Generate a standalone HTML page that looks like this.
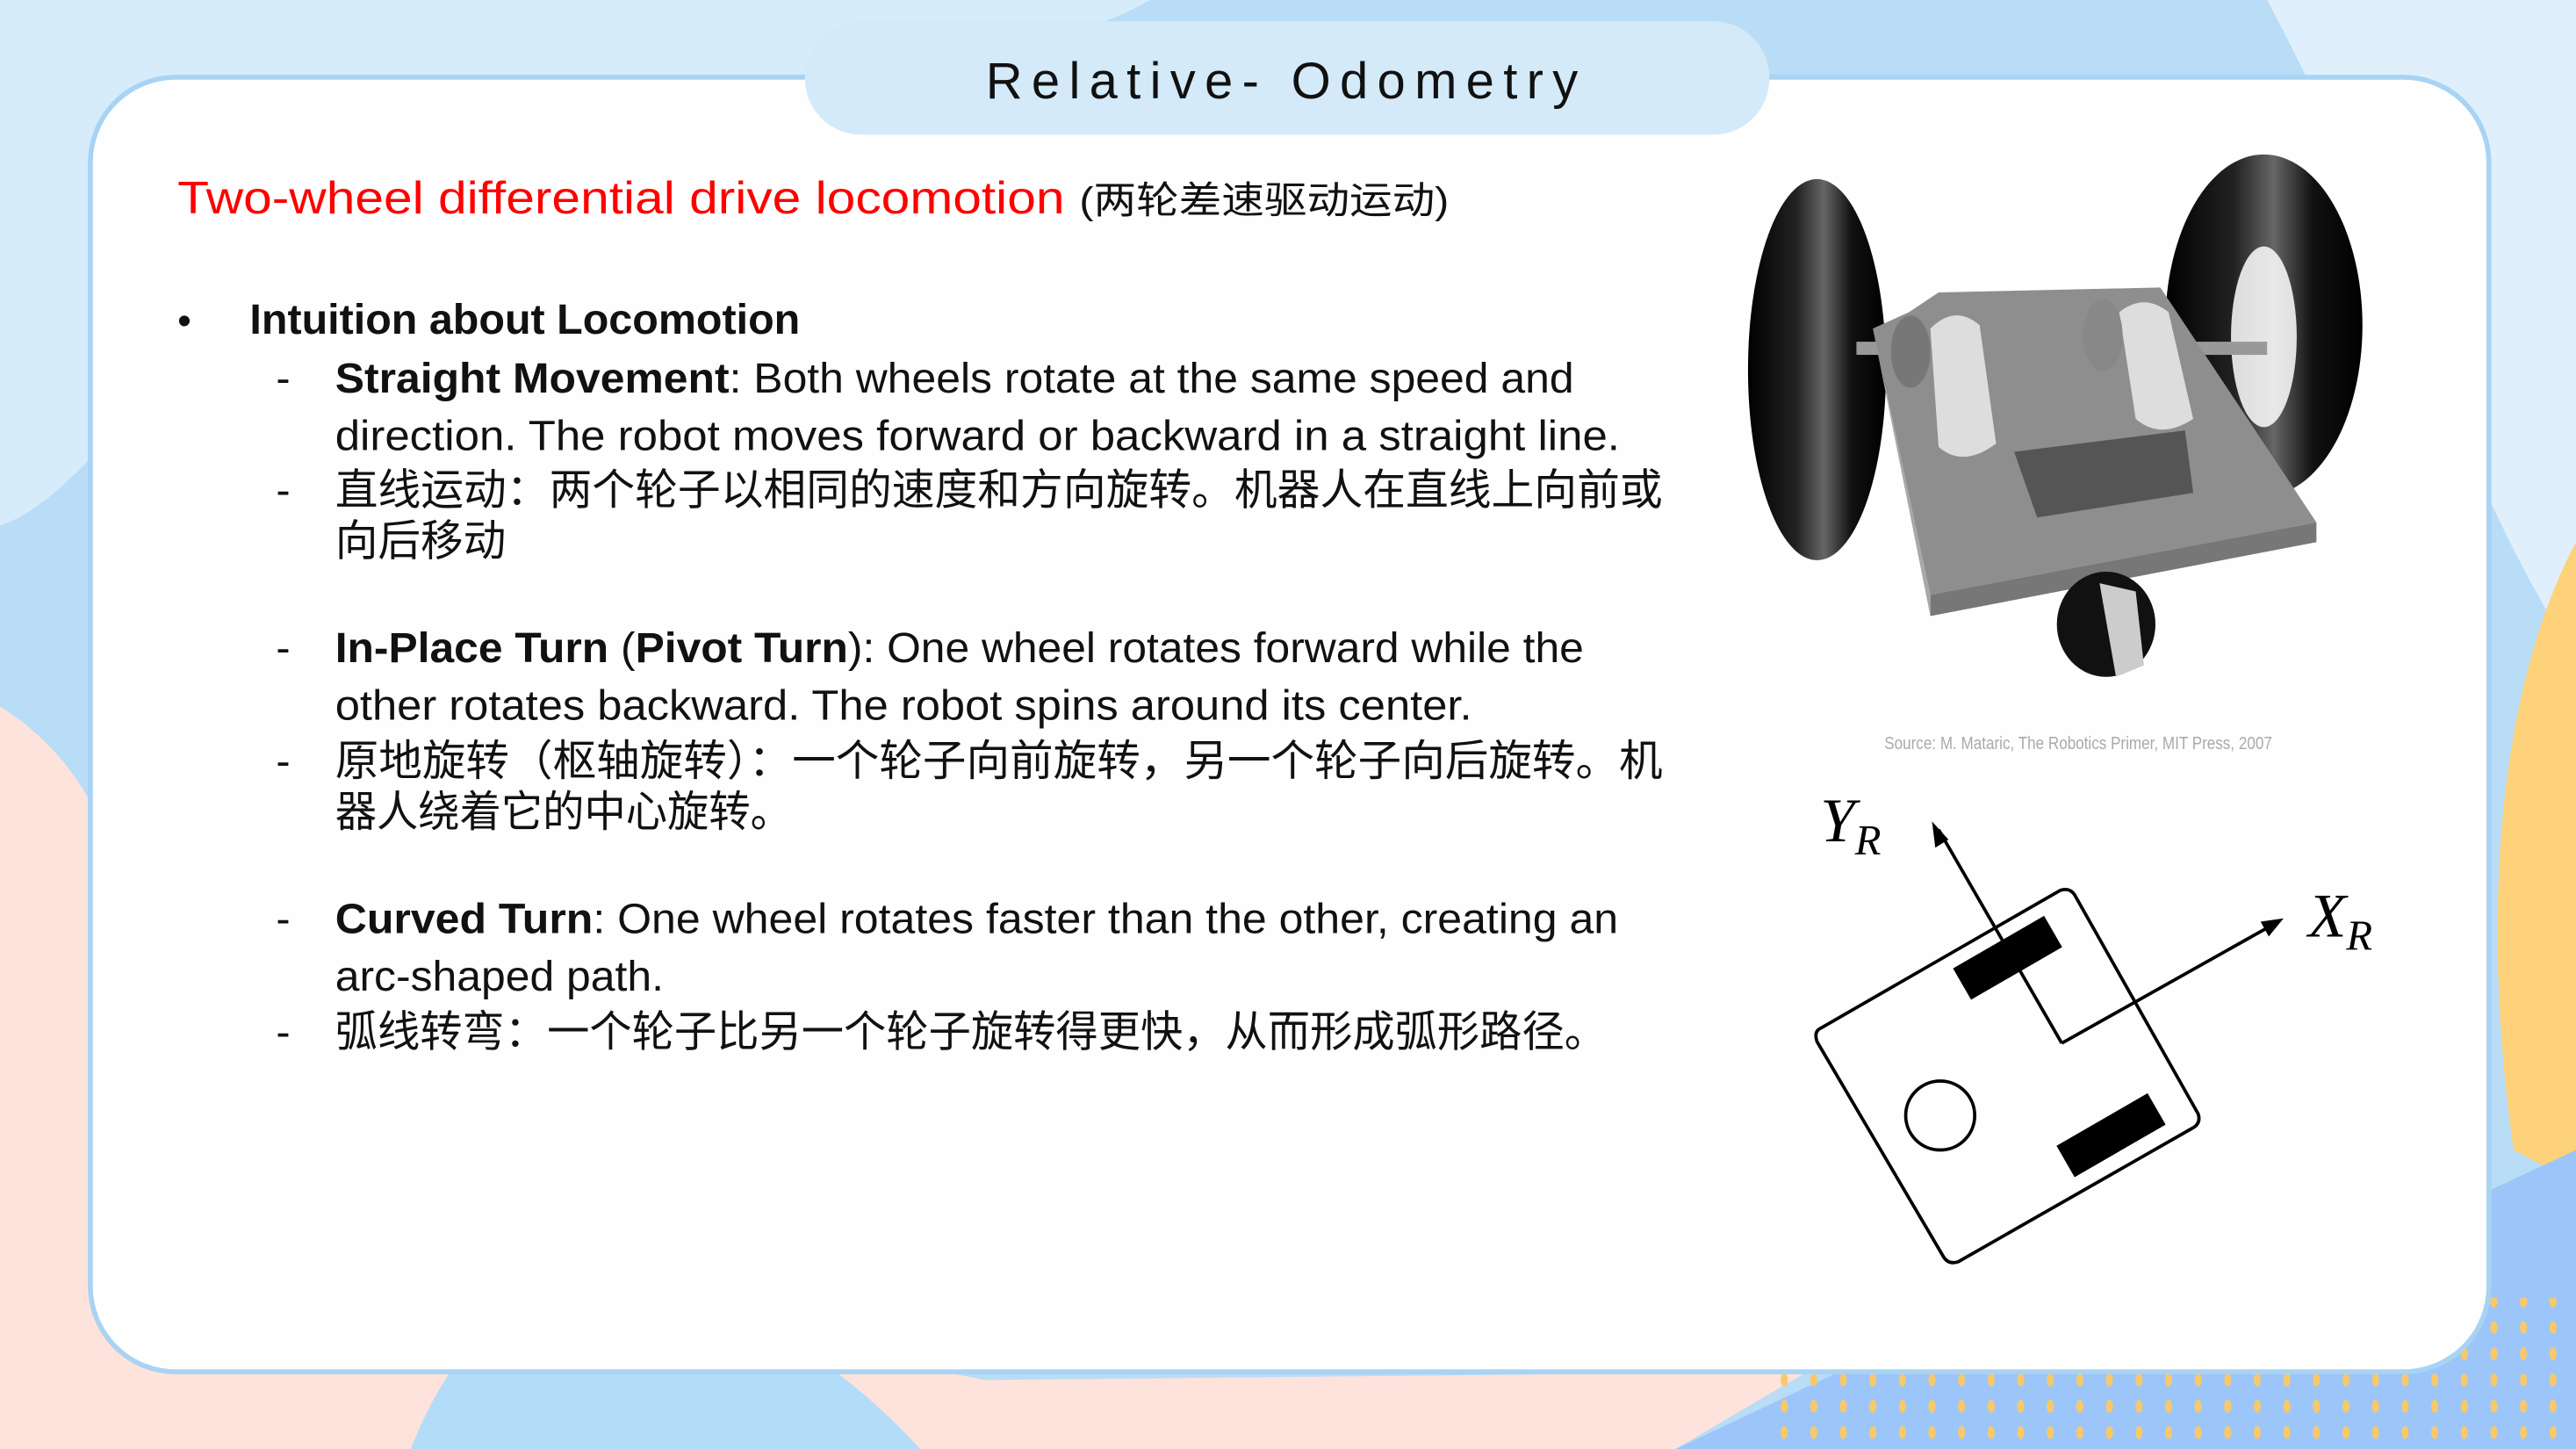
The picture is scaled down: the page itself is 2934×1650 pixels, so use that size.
<!DOCTYPE html>
<html><head><meta charset="utf-8"><style>html,body{margin:0;padding:0;overflow:hidden}svg{display:block}</style></head>
<body>
<svg width="2934" height="1650" viewBox="0 0 1568 882" preserveAspectRatio="none" xmlns="http://www.w3.org/2000/svg">
<defs>
<linearGradient id="tire" x1="0" y1="0" x2="1" y2="0"><stop offset="0" stop-color="#000"/><stop offset="0.35" stop-color="#222"/><stop offset="0.55" stop-color="#666"/><stop offset="0.75" stop-color="#111"/><stop offset="1" stop-color="#000"/></linearGradient>
<pattern id="ydots" width="18" height="16" patternUnits="userSpaceOnUse"><ellipse cx="6" cy="8" rx="2.2" ry="4" fill="#f7c96a"/></pattern>
</defs>
<rect width="1568" height="882" fill="#b9dcf7"/>
<path d="M0 0 H700 C600 60 300 40 200 120 C120 180 60 300 0 320Z" fill="#d6ecfb"/>
<path d="M1380 0 H1568 V400 C1500 300 1460 150 1380 0Z" fill="#dff0fc"/>
<path d="M0 430 C80 480 120 600 60 882 H0Z" fill="#fde3dc"/>
<path d="M0 882 V780 C200 820 400 800 600 840 L1100 835 L1020 882Z" fill="#fde3dc"/>
<path d="M250 882 C290 780 360 760 430 790 C500 820 540 860 560 882Z" fill="#b3dcf9"/>
<path d="M1568 330 C1520 420 1510 560 1530 700 L1568 720Z" fill="#fdd27a"/>
<path d="M1020 882 L1130 830 L1440 760 L1568 700 V882Z" fill="#9cc5fa"/>
<rect x="1080" y="790" width="488" height="92" fill="url(#ydots)"/>
<rect x="55" y="47" width="1460" height="788" rx="52" fill="#fefefe" stroke="#a9d3f3" stroke-width="3"/>
<rect x="490" y="13" width="587" height="69" rx="34" fill="#d4eaf8"/>
<text x="783" y="60" text-anchor="middle" font-family="Liberation Sans, sans-serif" font-size="31" letter-spacing="5.5" fill="#111">Relative- Odometry</text>
<g font-family="Liberation Sans, 'Noto Sans CJK SC', sans-serif">
<text x="108" y="130" font-size="28" fill="#ff0000" textLength="540" lengthAdjust="spacingAndGlyphs">Two-wheel differential drive locomotion</text>
<text x="657" y="130" font-size="23" fill="#111" textLength="225" lengthAdjust="spacingAndGlyphs">(两轮差速驱动运动)</text>
<text x="108" y="203" font-size="24" fill="#111">•</text>
<text x="152" y="203" font-size="26" font-weight="bold" fill="#111" textLength="335" lengthAdjust="spacingAndGlyphs">Intuition about Locomotion</text>
<g font-size="26" fill="#111">
<text x="168" y="239">-</text>
<text x="204" y="239" textLength="754" lengthAdjust="spacingAndGlyphs"><tspan font-weight="bold">Straight Movement</tspan>: Both wheels rotate at the same speed and</text>
<text x="204" y="274" textLength="782" lengthAdjust="spacingAndGlyphs">direction. The robot moves forward or backward in a straight line.</text>
<text x="168" y="307">-</text>
<text x="204" y="307" textLength="808" lengthAdjust="spacingAndGlyphs">直线运动：两个轮子以相同的速度和方向旋转。机器人在直线上向前或</text>
<text x="204" y="338" textLength="104" lengthAdjust="spacingAndGlyphs">向后移动</text>
<text x="168" y="403">-</text>
<text x="204" y="403" textLength="760" lengthAdjust="spacingAndGlyphs"><tspan font-weight="bold">In-Place Turn</tspan> (<tspan font-weight="bold">Pivot Turn</tspan>): One wheel rotates forward while the</text>
<text x="204" y="438" textLength="692" lengthAdjust="spacingAndGlyphs">other rotates backward. The robot spins around its center.</text>
<text x="168" y="472">-</text>
<text x="204" y="472" textLength="808" lengthAdjust="spacingAndGlyphs">原地旋转（枢轴旋转）：一个轮子向前旋转，另一个轮子向后旋转。机</text>
<text x="204" y="503" textLength="278" lengthAdjust="spacingAndGlyphs">器人绕着它的中心旋转。</text>
<text x="168" y="568">-</text>
<text x="204" y="568" textLength="781" lengthAdjust="spacingAndGlyphs"><tspan font-weight="bold">Curved Turn</tspan>: One wheel rotates faster than the other, creating an</text>
<text x="204" y="603" textLength="200" lengthAdjust="spacingAndGlyphs">arc-shaped path.</text>
<text x="168" y="637">-</text>
<text x="204" y="637" textLength="774" lengthAdjust="spacingAndGlyphs">弧线转弯：一个轮子比另一个轮子旋转得更快，从而形成弧形路径。</text>
</g>
<text x="1147" y="456" font-size="11" fill="#aaa" textLength="236" lengthAdjust="spacingAndGlyphs">Source: M. Mataric, The Robotics Primer, MIT Press, 2007</text>
</g>
<!-- robot -->
<ellipse cx="1378" cy="198" rx="60" ry="104" fill="url(#tire)"/>
<ellipse cx="1378" cy="205" rx="20" ry="55" fill="#fff" opacity="0.85"/>
<ellipse cx="1106" cy="225" rx="42" ry="116" fill="url(#tire)"/>
<rect x="1130" y="208" width="250" height="8" fill="#999"/>
<path d="M1162 190 L1180 178 L1315 175 L1410 318 L1175 362 L1140 200Z" fill="#8e8e8e"/>
<path d="M1410 318 L1410 330 L1175 375 L1175 362Z" fill="#777"/>
<path d="M1140 200 L1175 362 L1175 375 L1150 250Z" fill="#a8a8a8"/>
<path d="M1226 275 L1330 262 L1335 300 L1240 315Z" fill="#555"/>
<path d="M1175 200 Q1190 185 1205 198 L1215 270 Q1195 285 1180 272Z" fill="#ddd"/>
<path d="M1290 190 Q1305 178 1320 190 L1335 255 Q1315 268 1300 255Z" fill="#ddd"/>
<ellipse cx="1163" cy="214" rx="12" ry="22" fill="#777"/>
<ellipse cx="1280" cy="204" rx="12" ry="22" fill="#888"/>
<rect x="1276" y="355" width="8" height="15" fill="#999"/>
<ellipse cx="1282" cy="380" rx="30" ry="32" fill="#111"/>
<path d="M1278 355 L1300 360 L1305 405 L1288 412Z" fill="#ccc"/>
<!-- diagram -->
<g stroke="#000" stroke-width="2" fill="none">
<path d="M1108 626 L1254 542 Q1260 540 1263 545 L1338 678 Q1340 684 1334 687 L1192 768 Q1186 770 1183 765 L1106 634 Q1104 628 1108 626Z"/>
<circle cx="1181" cy="679" r="21"/>
<path d="M1255 635 L1180 505"/>
<path d="M1255 635 L1385 562"/>
</g>
<path d="M1176 500 L1178 516 L1186 511Z" fill="#000"/>
<path d="M1390 559 L1376 561 L1381 570Z" fill="#000"/>
<rect x="-32" y="-11" width="64" height="22" fill="#000" transform="translate(1222 583) rotate(-30)"/>
<rect x="-32" y="-11" width="64" height="22" fill="#000" transform="translate(1285 691) rotate(-30)"/>
<text x="1108" y="512" font-family="Liberation Serif, serif" font-style="italic" font-size="38" fill="#000">Y<tspan font-size="26" dy="8">R</tspan></text>
<text x="1405" y="570" font-family="Liberation Serif, serif" font-style="italic" font-size="38" fill="#000">X<tspan font-size="26" dy="8">R</tspan></text>
</svg>
</body></html>
